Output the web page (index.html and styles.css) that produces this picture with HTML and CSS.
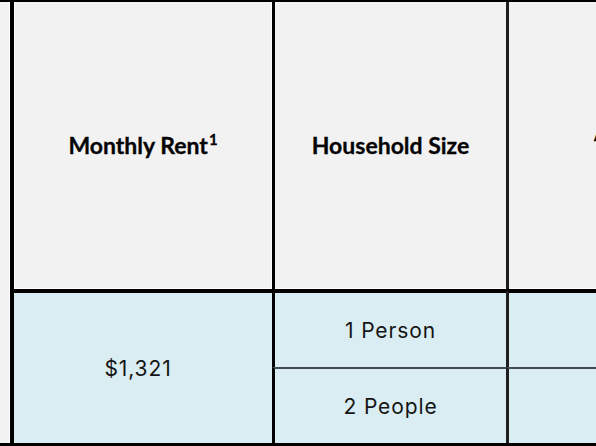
FILE: index.html
```html
<!DOCTYPE html>
<html lang="en">
<head>
<meta charset="utf-8">
<title>Rent table</title>
<link rel="stylesheet" href="styles.css">
</head>
<body>
<div class="sheet">
  <div class="stub"></div>
  <div class="cell head c1"><span>Monthly Rent<sup class="note">1</sup></span></div>
  <div class="cell head c2"><span>Household Size</span></div>
  <div class="cell head c3"><span>Annual Income<br>Limit</span></div>

  <div class="cell body c1 merged first"><span class="rent">$1,321</span></div>
  <div class="cell body c2 first"><span>1 Person</span></div>
  <div class="cell body c3 first"></div>

  <div class="cell body c2 second"><span>2 People</span></div>
  <div class="cell body c3 second"></div>
</div>
</body>
</html>
```
FILE: styles.css
```css
* { box-sizing: border-box; }

html, body {
  margin: 0;
  padding: 0;
  width: 596px;
  height: 446px;
  overflow: hidden;
  background: #f2f2f2;
}

.sheet {
  display: grid;
  grid-template-columns: 10px 262px 234px 326px;
  grid-template-rows: 287px 78px 76px;
  width: 832px;
  border-top: 2px solid #000;
  border-bottom: 3px solid #000;
}

.stub {
  grid-column: 1;
  grid-row: 1 / 4;
  background: #f2f2f2;
  border-right: 1px solid #ffffff;
}

.cell {
  display: flex;
  align-items: center;
  justify-content: center;
  text-align: center;
  color: #111;
}

.head {
  background: #f2f2f2;
  font-family: "Lato", "Open Sans", sans-serif;
  font-weight: 700;
  font-size: 23px;
  line-height: 27px;
  color: #050505;
  -webkit-text-stroke: 0.3px #050505;
  box-shadow: inset 0 -1px #ffffff;
  white-space: nowrap;
}

.body {
  background: #daedf2;
  font-family: "Inter", "Liberation Sans", sans-serif;
  font-size: 21px;
  letter-spacing: 0.9px;
  color: #151515;
}

.c1 { grid-column: 2; border-left: 4px solid #000; box-shadow: inset 1px 0 #ffffff, inset -1px 0 #ffffff, inset 0 -1px #ffffff; }
.c2 { grid-column: 3; border-left: 3px solid #000; }
.c3 { grid-column: 4; border-left: 3px solid #1e1e1e; }

.body.c1 { box-shadow: none; }

.head { grid-row: 1; }
.first { grid-row: 2; border-top: 4px solid #000; }
.second { grid-row: 3; border-top: 2px solid #414b55; }
.merged { grid-row: 2 / 4; }

.rent { margin-right: 10px; }

.note {
  font-size: 15px;
  font-weight: 700;
  line-height: 0;
  vertical-align: 9px;
  margin-left: 1px;
}
```
